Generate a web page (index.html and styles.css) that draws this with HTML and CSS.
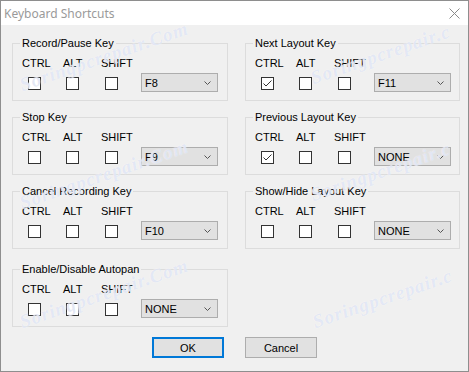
FILE: index.html
```html
<!DOCTYPE html>
<html lang="en">

<head>
    <meta charset="UTF-8">
    <title>Keyboard Shortcuts</title>
    <link rel="stylesheet" href="styles.css">
</head>

<body>
    <div class="window">
        <div class="titlebar">
            <span class="title">Keyboard Shortcuts</span>
            <svg class="close" width="11" height="11" viewBox="0 0 11 11">
                <path d="M0.5 0.5 L10.5 10.5 M10.5 0.5 L0.5 10.5" stroke="#8a8a8a" stroke-width="1" fill="none" />
            </svg>
        </div>
        <div class="client">
            <div class="columns">
                <div class="column column-left">
                    <fieldset class="group">
                        <legend>Record/Pause Key</legend>
                        <div class="keys">
                            <div class="key key-ctrl"><span>CTRL</span><span class="check"></span></div>
                            <div class="key key-alt"><span>ALT</span><span class="check"></span></div>
                            <div class="key key-shift"><span>SHIFT</span><span class="check"></span></div>
                            <div class="combo"><span>F8</span><svg class="arrow" width="7" height="4" viewBox="0 0 7 4"><path d="M0.5 0.5 L3.5 3.5 L6.5 0.5" stroke="#555" fill="none" /></svg></div>
                        </div>
                    </fieldset>
                    <fieldset class="group">
                        <legend>Stop Key</legend>
                        <div class="keys">
                            <div class="key key-ctrl"><span>CTRL</span><span class="check"></span></div>
                            <div class="key key-alt"><span>ALT</span><span class="check"></span></div>
                            <div class="key key-shift"><span>SHIFT</span><span class="check"></span></div>
                            <div class="combo"><span>F9</span><svg class="arrow" width="7" height="4" viewBox="0 0 7 4"><path d="M0.5 0.5 L3.5 3.5 L6.5 0.5" stroke="#555" fill="none" /></svg></div>
                        </div>
                    </fieldset>
                    <fieldset class="group">
                        <legend>Cancel Recording Key</legend>
                        <div class="keys">
                            <div class="key key-ctrl"><span>CTRL</span><span class="check"></span></div>
                            <div class="key key-alt"><span>ALT</span><span class="check"></span></div>
                            <div class="key key-shift"><span>SHIFT</span><span class="check"></span></div>
                            <div class="combo"><span>F10</span><svg class="arrow" width="7" height="4" viewBox="0 0 7 4"><path d="M0.5 0.5 L3.5 3.5 L6.5 0.5" stroke="#555" fill="none" /></svg></div>
                        </div>
                    </fieldset>
                    <fieldset class="group group-last">
                        <legend>Enable/Disable Autopan</legend>
                        <div class="keys">
                            <div class="key key-ctrl"><span>CTRL</span><span class="check"></span></div>
                            <div class="key key-alt"><span>ALT</span><span class="check"></span></div>
                            <div class="key key-shift"><span>SHIFT</span><span class="check"></span></div>
                            <div class="combo"><span>NONE</span><svg class="arrow" width="7" height="4" viewBox="0 0 7 4"><path d="M0.5 0.5 L3.5 3.5 L6.5 0.5" stroke="#555" fill="none" /></svg></div>
                        </div>
                    </fieldset>
                </div>
                <div class="column column-right">
                    <fieldset class="group">
                        <legend>Next Layout Key</legend>
                        <div class="keys">
                            <div class="key key-ctrl"><span>CTRL</span><span class="check checked"><svg width="11" height="11" viewBox="0 0 11 11"><path d="M1.5 5.5 L4 8 L9.5 2.5" stroke="#333" fill="none" /></svg></span></div>
                            <div class="key key-alt"><span>ALT</span><span class="check"></span></div>
                            <div class="key key-shift"><span>SHIFT</span><span class="check"></span></div>
                            <div class="combo"><span>F11</span><svg class="arrow" width="7" height="4" viewBox="0 0 7 4"><path d="M0.5 0.5 L3.5 3.5 L6.5 0.5" stroke="#555" fill="none" /></svg></div>
                        </div>
                    </fieldset>
                    <fieldset class="group">
                        <legend>Previous Layout Key</legend>
                        <div class="keys">
                            <div class="key key-ctrl"><span>CTRL</span><span class="check checked"><svg width="11" height="11" viewBox="0 0 11 11"><path d="M1.5 5.5 L4 8 L9.5 2.5" stroke="#333" fill="none" /></svg></span></div>
                            <div class="key key-alt"><span>ALT</span><span class="check"></span></div>
                            <div class="key key-shift"><span>SHIFT</span><span class="check"></span></div>
                            <div class="combo"><span>NONE</span><svg class="arrow" width="7" height="4" viewBox="0 0 7 4"><path d="M0.5 0.5 L3.5 3.5 L6.5 0.5" stroke="#555" fill="none" /></svg></div>
                        </div>
                    </fieldset>
                    <fieldset class="group">
                        <legend>Show/Hide Layout Key</legend>
                        <div class="keys">
                            <div class="key key-ctrl"><span>CTRL</span><span class="check"></span></div>
                            <div class="key key-alt"><span>ALT</span><span class="check"></span></div>
                            <div class="key key-shift"><span>SHIFT</span><span class="check"></span></div>
                            <div class="combo"><span>NONE</span><svg class="arrow" width="7" height="4" viewBox="0 0 7 4"><path d="M0.5 0.5 L3.5 3.5 L6.5 0.5" stroke="#555" fill="none" /></svg></div>
                        </div>
                    </fieldset>
                </div>
            </div>
            <div class="buttons">
                <button class="btn btn-default">OK</button>
                <button class="btn">Cancel</button>
            </div>
        </div>
        <!-- watermark from the source screenshot -->
        <span class="wm" style="left: 23px; top: 95px;">Soringpcrepair.Com</span>
        <span class="wm" style="left: 23px; top: 213px;">Soringpcrepair.Com</span>
        <span class="wm" style="left: 23px; top: 332px;">Soringpcrepair.Com</span>
        <span class="wm" style="left: 314px; top: 88px;">Soringpcrepair.c</span>
        <span class="wm" style="left: 314px; top: 205px;">Soringpcrepair.c</span>
        <span class="wm" style="left: 316px; top: 332px;">Soringpcrepair.c</span>
    </div>
</body>

</html>
```

FILE: styles.css
```css
/* Page */
body {
    margin: 0;
    font-family: "Liberation Sans", Arial, sans-serif;
    font-size: 11px;
    color: #000;
}

/* Dialog window */
.window {
    position: relative;
    width: 469px;
    height: 372px;
    box-sizing: border-box;
    border: 1px solid #8e8e8e;
    background-color: #f0f0f0;
    overflow: hidden;
}

.titlebar {
    display: flex;
    align-items: center;
    height: 24px;
    background-color: #fff;
}

.title {
    padding-left: 3px;
    font-family: "Noto Sans", sans-serif;
    font-size: 12px;
    color: #9a9a9a;
}

.close {
    margin-left: auto;
    margin-right: 8px;
}

.client {
    padding: 12px 8px 0 11px;
}

.columns {
    display: flex;
    gap: 17px;
}

.column {
    display: flex;
    flex-direction: column;
    gap: 10px;
}

.column-left {
    width: 216px;
}

.column-right {
    width: 215px;
}

/* Group boxes */
.group {
    margin: 0;
    padding: 7px 0 10px 9px;
    border: 1px solid #dcdcdc;
    min-width: 0;
}

.group-last {
    margin-top: 4px;
}

.group legend {
    margin-left: -2px;
    padding: 0 2px;
    line-height: 13px;
}

.keys {
    display: flex;
    align-items: flex-end;
}

.key {
    display: flex;
    flex-direction: column;
    align-items: flex-start;
    line-height: 13px;
}

.key-ctrl {
    width: 41px;
}

.key-alt {
    width: 38px;
}

.key-shift {
    width: 40px;
}

.check {
    display: block;
    width: 13px;
    height: 13px;
    box-sizing: border-box;
    margin-top: 7px;
    border: 1px solid #333;
    background-color: #fff;
}

.check svg {
    display: block;
}

.key-ctrl .check {
    margin-left: 6px;
}

.key-alt .check {
    margin-left: 3px;
}

.key-shift .check {
    margin-left: 4px;
}

/* Drop down */
.combo {
    display: flex;
    align-items: center;
    width: 77px;
    height: 19px;
    box-sizing: border-box;
    margin-bottom: -2px;
    padding-left: 3px;
    border: 1px solid #adadad;
    background-color: #e1e1e1;
}

.arrow {
    margin-left: auto;
    margin-right: 6px;
}

/* Buttons */
.buttons {
    display: flex;
    justify-content: center;
    gap: 21px;
    margin-top: 10px;
    margin-right: 3px;
}

.btn {
    width: 72px;
    height: 21px;
    padding: 0;
    font-family: "Liberation Sans", Arial, sans-serif;
    font-size: 11px;
    color: #000;
    background-color: #e1e1e1;
    border: 1px solid #adadad;
}

.btn-default {
    border: 2px solid #0078d7;
}

/* Watermark */
.wm {
    position: absolute;
    transform: translateY(-100%) rotate(-19deg);
    transform-origin: left bottom;
    font-family: "Liberation Serif", serif;
    font-style: italic;
    font-weight: bold;
    font-size: 19px;
    letter-spacing: 1px;
    color: rgba(160, 175, 220, 0.28);
    text-shadow: 0 0 1px #fff;
    white-space: nowrap;
    pointer-events: none;
}
```
